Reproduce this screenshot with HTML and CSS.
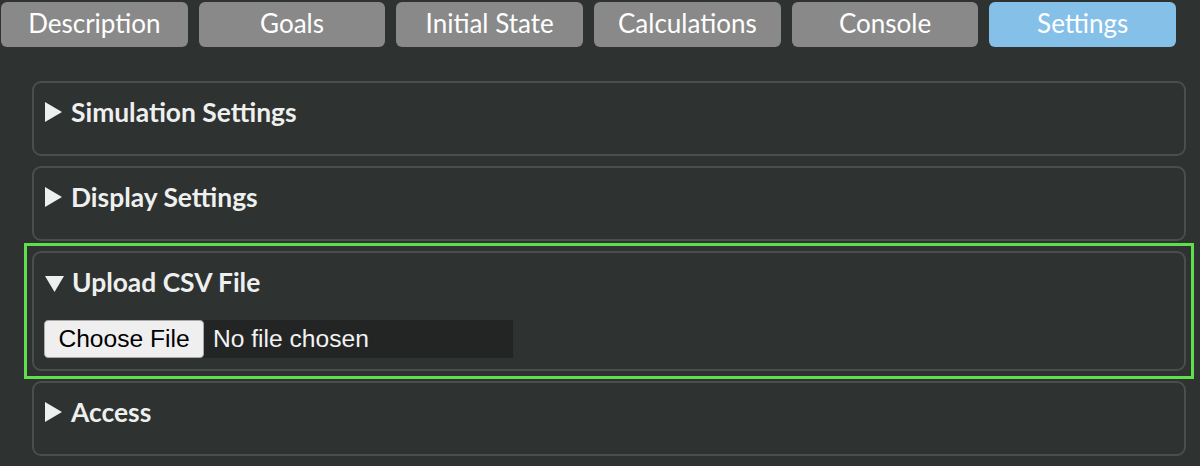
FILE: index.html
```html
<!DOCTYPE html>
<html lang="en">
<head>
<meta charset="utf-8">
<title>Settings</title>
<link rel="stylesheet" href="styles.css">
</head>
<body>
<nav class="tabs">
  <div class="tab">Description</div>
  <div class="tab">Goals</div>
  <div class="tab">Initial State</div>
  <div class="tab">Calculations</div>
  <div class="tab">Console</div>
  <div class="tab active">Settings</div>
</nav>
<main class="panels">
  <section class="panel">
    <div class="summary"><svg class="tri-right" width="17" height="20" viewBox="0 0 17 20"><polygon points="0,0 17,10 0,20"/></svg>Simulation Settings</div>
  </section>
  <section class="panel">
    <div class="summary"><svg class="tri-right" width="17" height="20" viewBox="0 0 17 20"><polygon points="0,0 17,10 0,20"/></svg>Display Settings</div>
  </section>
  <div class="highlight">
    <section class="panel open">
      <div class="summary"><svg class="tri-down" width="19" height="16" viewBox="0 0 19 16"><polygon points="0,0 19,0 9.5,16"/></svg>Upload CSV File</div>
      <div class="file">
        <span class="choose">Choose File</span><span class="chosen">No file chosen</span>
      </div>
    </section>
  </div>
  <section class="panel">
    <div class="summary"><svg class="tri-right" width="17" height="20" viewBox="0 0 17 20"><polygon points="0,0 17,10 0,20"/></svg>Access</div>
  </section>
</main>
</body>
</html>
```

FILE: styles.css
```css
html, body {
  margin: 0;
  padding: 0;
  background: #2e3230;
}

body {
  font-family: Lato, "Liberation Sans", sans-serif;
  color: #eef0ef;
  height: 466px;
  overflow: hidden;
}

.tabs {
  display: flex;
  gap: 11px;
  padding: 2px 24px 0 1px;
}

.tab {
  flex: 1;
  box-sizing: border-box;
  height: 45px;
  padding-bottom: 3px;
  display: flex;
  align-items: center;
  justify-content: center;
  background: #898989;
  color: #ffffff;
  font-size: 26px;
  border-radius: 6px;
}

.tab.active {
  background: #85c0e8;
}

.panels {
  padding: 34px 14px 0 32px;
}

.panel {
  border: 2px solid #4a4e4d;
  border-radius: 9px;
  height: 71px;
  margin-bottom: 10px;
  box-sizing: content-box;
}

.panel.open {
  height: 116px;
  margin-bottom: 0;
}

.highlight {
  border: 3px solid #5fe04a;
  padding: 5px;
  margin: -8px -8px 2px -8px;
}

.summary {
  padding: 14px 0 0 11px;
  font-size: 26.4px;
  font-weight: 700;
  line-height: 30px;
  white-space: nowrap;
}

.summary svg {
  fill: #eef0ef;
}

.tri-right {
  margin-right: 9px;
}

.tri-down {
  margin-right: 8px;
}

.file {
  display: flex;
  margin: 23px 0 0 10px;
  height: 38px;
  width: 469px;
  background: #222524;
  font-family: "Liberation Sans", Arial, sans-serif;
  font-size: 24.6px;
}

.choose {
  box-sizing: border-box;
  width: 160px;
  height: 38px;
  display: flex;
  align-items: center;
  justify-content: center;
  background: #efefef;
  color: #000000;
  border: 1px solid #a9a9a9;
  border-radius: 4px;
}

.chosen {
  display: flex;
  align-items: center;
  padding-left: 9px;
  color: #f2f2f2;
}
```
